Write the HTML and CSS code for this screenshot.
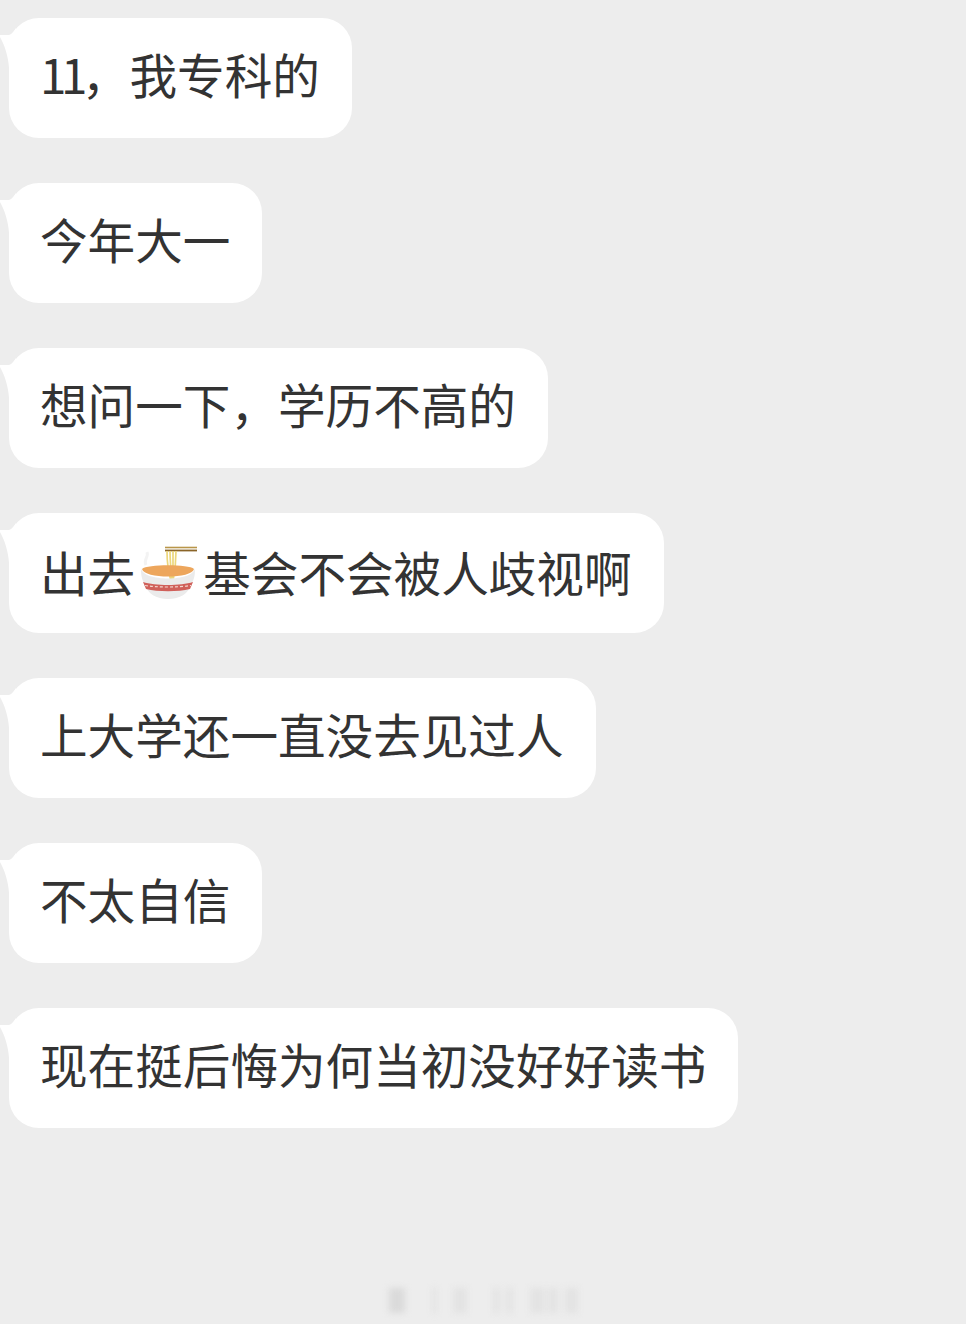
FILE: index.html
```html
<!DOCTYPE HTML>
<html lang="zh-CN">
  <head>
    <title>Chat</title>
    <meta charset="utf-8">
    <link rel="stylesheet" href="styles.css">
  </head>
  <body>

  <div id="chat">
    <div class="bubble"><span class="num">11</span>，我专科的</div>
    <div class="bubble">今年大一</div>
    <div class="bubble">想问一下，学历不高的</div>
    <div class="bubble has-emoji">出去<svg class="noodles" viewBox="3 0 68 60" width="68" height="60">
        <path d="M14 25c-3-5 3-8 1-13" stroke="#f3f3f3" stroke-width="3" fill="none"/>
        <path d="M33 7.500h32" stroke="#b9964a" stroke-width="1.6"/>
        <path d="M33 10.500h32" stroke="#8a6428" stroke-width="1.8"/>
        <path d="M35 11c0 9 1 20 4 30M38 11c0 9 1 20 2 30M41 11c0 9 0 20 0 30M44 11c0 9-1 20-3 30" stroke="#ecd67a" stroke-width="1.7" fill="none"/>
        <path d="M10 29c5-5 47-5 52 0c-2 10-50 10-52 0z" fill="#eda65c"/>
        <path d="M9 28c0 4 0 10 3 15c4 11 12 16 24 16s20-5 24-16c3-5 3-11 3-15c-1 14-53 14-54 0z" fill="#ebebeb"/>
        <path d="M11 42c12 4 38 4 50 0l-3 7c-12 3-32 3-44 0z" fill="#d0605a"/>
        <path d="M13 45.500c12 2 34 2 46 0" stroke="#f3d8d0" stroke-width="1.2" stroke-dasharray="3 2" fill="none"/>
      </svg>基会不会被人歧视啊</div>
    <div class="bubble">上大学还一直没去见过人</div>
    <div class="bubble">不太自信</div>
    <div class="bubble">现在挺后悔为何当初没好好读书</div>
  </div>

  <div id="watermark">
    <span class="mark"></span>
    <span class="mark"></span>
    <span class="mark"></span>
    <span class="mark"></span>
    <span class="mark"></span>
    <span class="mark"></span>
    <span class="mark"></span>
    <span class="mark"></span>
  </div>

  </body>
</html>
```
FILE: styles.css
```css
html {
  height: 100%;
}
body {
  margin: 0;
  padding: 0;
  height: 1324px;
  overflow: hidden;
  position: relative;
  background: #ededed;
  color: #333;
  font-family: "Noto Sans CJK SC", "Noto Sans", sans-serif;
  font-size: 47.6px;
}

#chat {
  display: flex;
  flex-direction: column;
  align-items: flex-start;
  gap: 45px;
  padding: 18px 0 0 9px;
}

.bubble {
  position: relative;
  box-sizing: border-box;
  display: flex;
  align-items: center;
  height: 120px;
  padding: 0 32px 9px 31px;
  background: #fff;
  border-radius: 30px;
  white-space: nowrap;
}

/* the emoji line sits a little lower than the others */
.bubble.has-emoji {
  padding-bottom: 3px;
}

/* tail on the left edge of each bubble */
.bubble::before {
  content: "";
  position: absolute;
  left: -9px;
  top: 10px;
  width: 22px;
  height: 40px;
  background: #fff;
  clip-path: path("M0 7 L9 7 C12 6 14 3 16 0 L22 40 L9 40 C8 28 5 18 0 9 Z");
}

/* digits sit tighter than the CJK font sets them */
.num {
  letter-spacing: -5.5px;
}

.noodles {
  flex: none;
  margin-bottom: 3px;
}

#watermark {
  position: absolute;
  left: 389px;
  top: 1288px;
  display: flex;
  filter: blur(3px);
}

.mark {
  height: 25px;
  background: #e3e3e3;
}
.mark:nth-child(1) { width: 16px; background: #dadada; }
.mark:nth-child(2) { width: 5px; margin-left: 27px; }
.mark:nth-child(3) { width: 14px; margin-left: 16px; }
.mark:nth-child(4) { width: 7px; margin-left: 26px; }
.mark:nth-child(5) { width: 7px; margin-left: 6px; }
.mark:nth-child(6) { width: 15px; margin-left: 17px; }
.mark:nth-child(7) { width: 10px; margin-left: 3px; }
.mark:nth-child(8) { width: 13px; margin-left: 7px; }
```
